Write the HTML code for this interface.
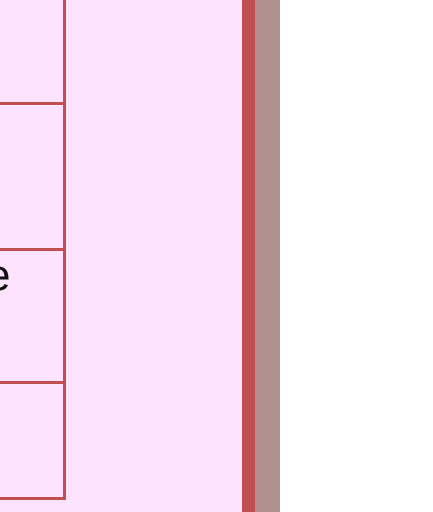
<!DOCTYPE html>
<html><head><style>
html,body{margin:0;padding:0;width:433px;height:512px;overflow:hidden;background:#fff;}
.bg{position:absolute;left:0;top:0;width:242px;height:512px;background:#fde3fd;}
.red{position:absolute;left:242px;top:0;width:13px;height:512px;background:#c0504f;}
.gray{position:absolute;left:255px;top:0;width:25px;height:512px;background:#b09190;}
.v{position:absolute;left:63px;top:0;width:3px;height:500px;background:#c0504f;}
.h{position:absolute;left:0;width:66px;height:3px;background:#c0504f;}
.t{position:absolute;left:-14px;top:251px;font-family:"Liberation Sans",sans-serif;font-size:44px;color:#111;}
</style></head><body>
<div class="bg"></div><div class="red"></div><div class="gray"></div>
<div class="v"></div>
<div class="h" style="top:102px"></div>
<div class="h" style="top:248px"></div>
<div class="h" style="top:381px"></div>
<div class="h" style="top:497px"></div>
<div class="t">e</div>
</body></html>
